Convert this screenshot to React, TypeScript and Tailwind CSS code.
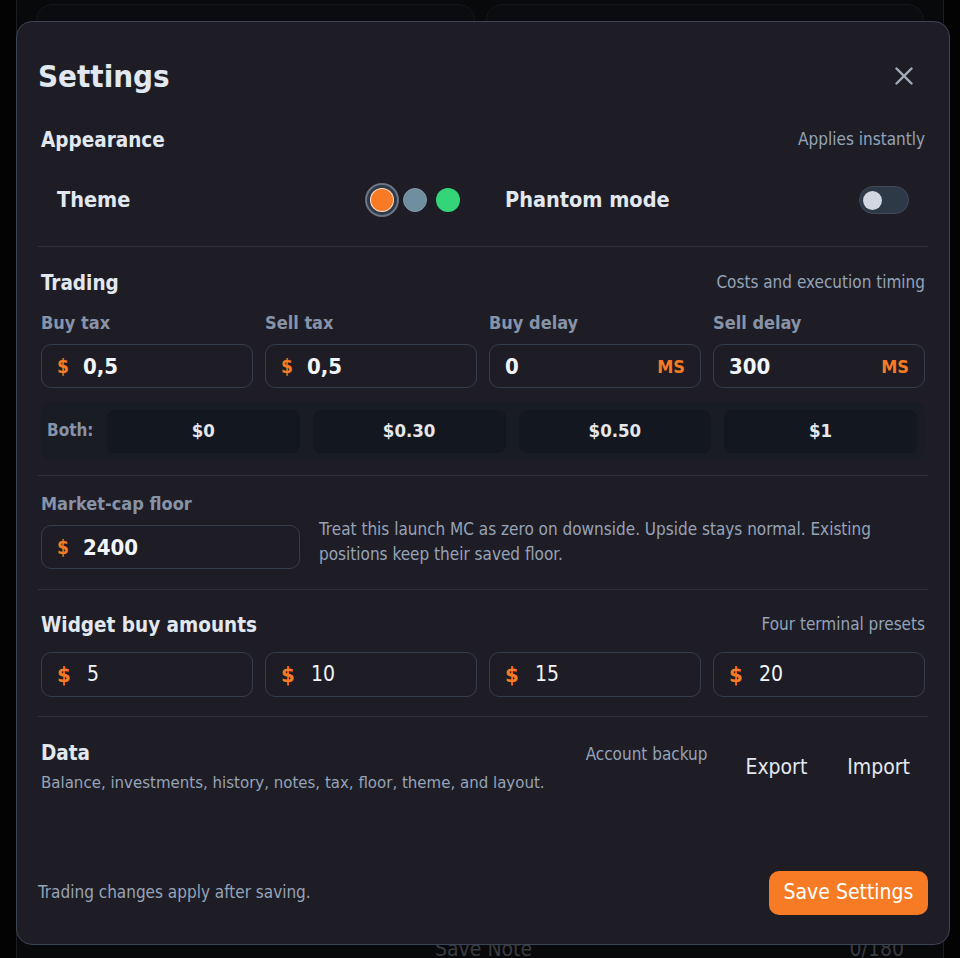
import type { ReactNode } from "react";

const taxFields = [
  { label: "Buy tax", value: "0,5", unit: "$" },
  { label: "Sell tax", value: "0,5", unit: "$" },
  { label: "Buy delay", value: "0", unit: "MS" },
  { label: "Sell delay", value: "300", unit: "MS" },
];

const presets = ["$0", "$0.30", "$0.50", "$1"];
const buyAmounts = ["5", "10", "15", "20"];

function SectionHeader({ title, note }: { title: string; note?: string }) {
  return (
    <div className="flex h-[24px] items-center justify-between px-[3px]">
      <h2 className="text-[20.5px] font-bold text-[#e2e8f0]">{title}</h2>
      {note && <span className="text-[17px] text-[#94a3b8]">{note}</span>}
    </div>
  );
}

function Divider({ className }: { className: string }) {
  return <div className={`h-px bg-[#2c313c] ${className}`} />;
}

function Field({ children, className = "" }: { children: ReactNode; className?: string }) {
  return (
    <div
      className={`flex h-[44px] items-center rounded-[10px] border border-[#343e4e] px-[15px] ${className}`}
    >
      {children}
    </div>
  );
}

export default function App() {
  return (
    <div className="relative h-[958px] w-full overflow-hidden bg-[#030304] font-['DejaVu_Sans_Condensed','DejaVu_Sans',sans-serif] [font-stretch:condensed]">
      {/* page behind the dialog */}
      <div className="mx-[16px] flex h-full flex-col border-x border-[#1b1d23] bg-[#08090b] px-[19px]">
        <div className="mt-[4px] grid flex-1 grid-cols-2 gap-[11px]">
          <div className="rounded-t-2xl border border-[#14161b] bg-[#0b0c0f]" />
          <div className="rounded-t-2xl border border-[#14161b] bg-[#0b0c0f]" />
        </div>
        <div className="flex h-[20px] items-start justify-between pr-[20px] pl-[399px] text-[21px] leading-[22px] text-[#3a3b40]">
          <span>Save Note</span>
          <span>0/180</span>
        </div>
      </div>

      {/* dialog */}
      <div className="absolute top-[21px] left-[16px] flex h-[924px] w-[934px] flex-col rounded-[16px] border border-[#3a4455] bg-[#1e1d26] pr-[21px] pb-[29px] pl-[21px]">
        <div className="mt-[36px] flex h-[36px] items-center justify-between">
          <h1 className="text-[31px] font-bold text-[#e2e8f0]">Settings</h1>
          <button type="button" className="mr-[15px] text-[#a3adbd]" aria-label="Close">
            <svg width="18" height="18" viewBox="0 0 18 18" fill="none" stroke="currentColor" strokeWidth="2.4" strokeLinecap="round">
              <path d="M1.5 1.5l15 15M16.5 1.5l-15 15" />
            </svg>
          </button>
        </div>

        <div className="mt-[34px]">
          <SectionHeader title="Appearance" note="Applies instantly" />
        </div>
        <div className="mt-[32px] grid h-[28px] grid-cols-2 gap-[44px] px-[19px]">
          <div className="flex items-center justify-between">
            <span className="text-[21.5px] font-bold text-[#e2e8f0]">Theme</span>
            <div className="flex items-center gap-[9px] pr-[1px]">
              <span className="h-[24px] w-[24px] rounded-full border border-white/80 bg-[#f97a24] shadow-[0_0_0_3px_#313a47,0_0_0_5px_#6b7585]" />
              <span className="h-[24px] w-[24px] rounded-full border border-[#8497a6] bg-[#6f8fa0]" />
              <span className="h-[24px] w-[24px] rounded-full bg-[#34d579]" />
            </div>
          </div>
          <div className="flex items-center justify-between">
            <span className="text-[21.5px] font-bold text-[#e2e8f0]">Phantom mode</span>
            <span className="flex h-[28px] w-[50px] items-center rounded-full border border-[#3e4a5c] bg-[#2e3948] px-[3px]">
              <span className="h-[19px] w-[19px] rounded-full bg-[#d3d7df]" />
            </span>
          </div>
        </div>

        <Divider className="mt-[34px]" />

        <div className="mt-[24px]">
          <SectionHeader title="Trading" note="Costs and execution timing" />
        </div>
        <div className="mt-[18px] grid grid-cols-4 gap-[12px] px-[3px]">
          {taxFields.map((f) => (
            <div key={f.label} className="flex flex-col">
              <span className="h-[20px] text-[18px] leading-[20px] font-bold text-[#8793a8]">{f.label}</span>
              <Field className="mt-[11px]">
                {f.unit === "$" && (
                  <span className="w-[26px] text-[19px] font-bold text-[#f97a24]">$</span>
                )}
                <span className="flex-1 text-[22px] font-bold text-[#f1f5f9]">{f.value}</span>
                {f.unit === "MS" && <span className="text-[18px] font-bold text-[#f97a24]">MS</span>}
              </Field>
            </div>
          ))}
        </div>
        <div className="mx-[3px] mt-[14px] flex h-[58px] items-center gap-[13px] rounded-[10px] bg-[#1a1c24] pr-[8px] pl-[6px]">
          <span className="w-[47px] text-[17px] font-bold text-[#8793a8]">Both:</span>
          {presets.map((p) => (
            <button
              key={p}
              type="button"
              className="h-[43px] flex-1 rounded-[8px] bg-[#13171f] text-[18.5px] font-bold text-[#e5e7eb]"
            >
              {p}
            </button>
          ))}
        </div>

        <Divider className="mt-[15px]" />

        <div className="mt-[18px] flex flex-col px-[3px]">
          <span className="h-[20px] text-[18px] leading-[20px] font-bold text-[#8793a8]">Market-cap floor</span>
          <div className="mt-[11px] flex h-[44px] items-start gap-[19px]">
            <Field className="w-[259px] shrink-0">
              <span className="w-[26px] text-[19px] font-bold text-[#f97a24]">$</span>
              <span className="text-[22px] font-bold text-[#f1f5f9]">2400</span>
            </Field>
            <p className="-mt-[8px] max-w-[580px] text-[17px] leading-[25px] text-[#97a3b6]">
              Treat this launch MC as zero on downside. Upside stays normal. Existing positions keep their saved floor.
            </p>
          </div>
        </div>

        <Divider className="mt-[20px]" />

        <div className="mt-[23px]">
          <SectionHeader title="Widget buy amounts" note="Four terminal presets" />
        </div>
        <div className="mt-[15px] grid grid-cols-4 gap-[12px] px-[3px]">
          {buyAmounts.map((a) => (
            <Field key={a} className="h-[45px]">
              <span className="w-[30px] text-[22px] font-bold text-[#f97a24]">$</span>
              <span className="text-[21px] text-[#f1f5f9]">{a}</span>
            </Field>
          ))}
        </div>

        <Divider className="mt-[19px]" />

        <div className="mt-[24px] flex items-start justify-between px-[3px]">
          <div className="flex flex-col">
            <h2 className="h-[24px] text-[20.5px] leading-[24px] font-bold text-[#e2e8f0]">Data</h2>
            <span className="mt-[5px] text-[16.7px] text-[#97a3b6]">
              Balance, investments, history, notes, tax, floor, theme, and layout.
            </span>
          </div>
          <div className="flex items-start">
            <span className="mt-[1px] mr-[18px] text-[17px] text-[#94a3b8]">Account backup</span>
            <button type="button" className="mt-[11px] px-[20px] text-[21px] text-[#e2e8f0]">
              Export
            </button>
            <button type="button" className="mt-[11px] pr-[15px] pl-[20px] text-[21px] text-[#e2e8f0]">
              Import
            </button>
          </div>
        </div>

        <div className="mt-auto flex items-center justify-between">
          <span className="text-[17px] text-[#97a3b6]">Trading changes apply after saving.</span>
          <button
            type="button"
            className="h-[44px] w-[159px] rounded-[10px] bg-[#f77b25] text-[21px] text-white"
          >
            Save Settings
          </button>
        </div>
      </div>
    </div>
  );
}
